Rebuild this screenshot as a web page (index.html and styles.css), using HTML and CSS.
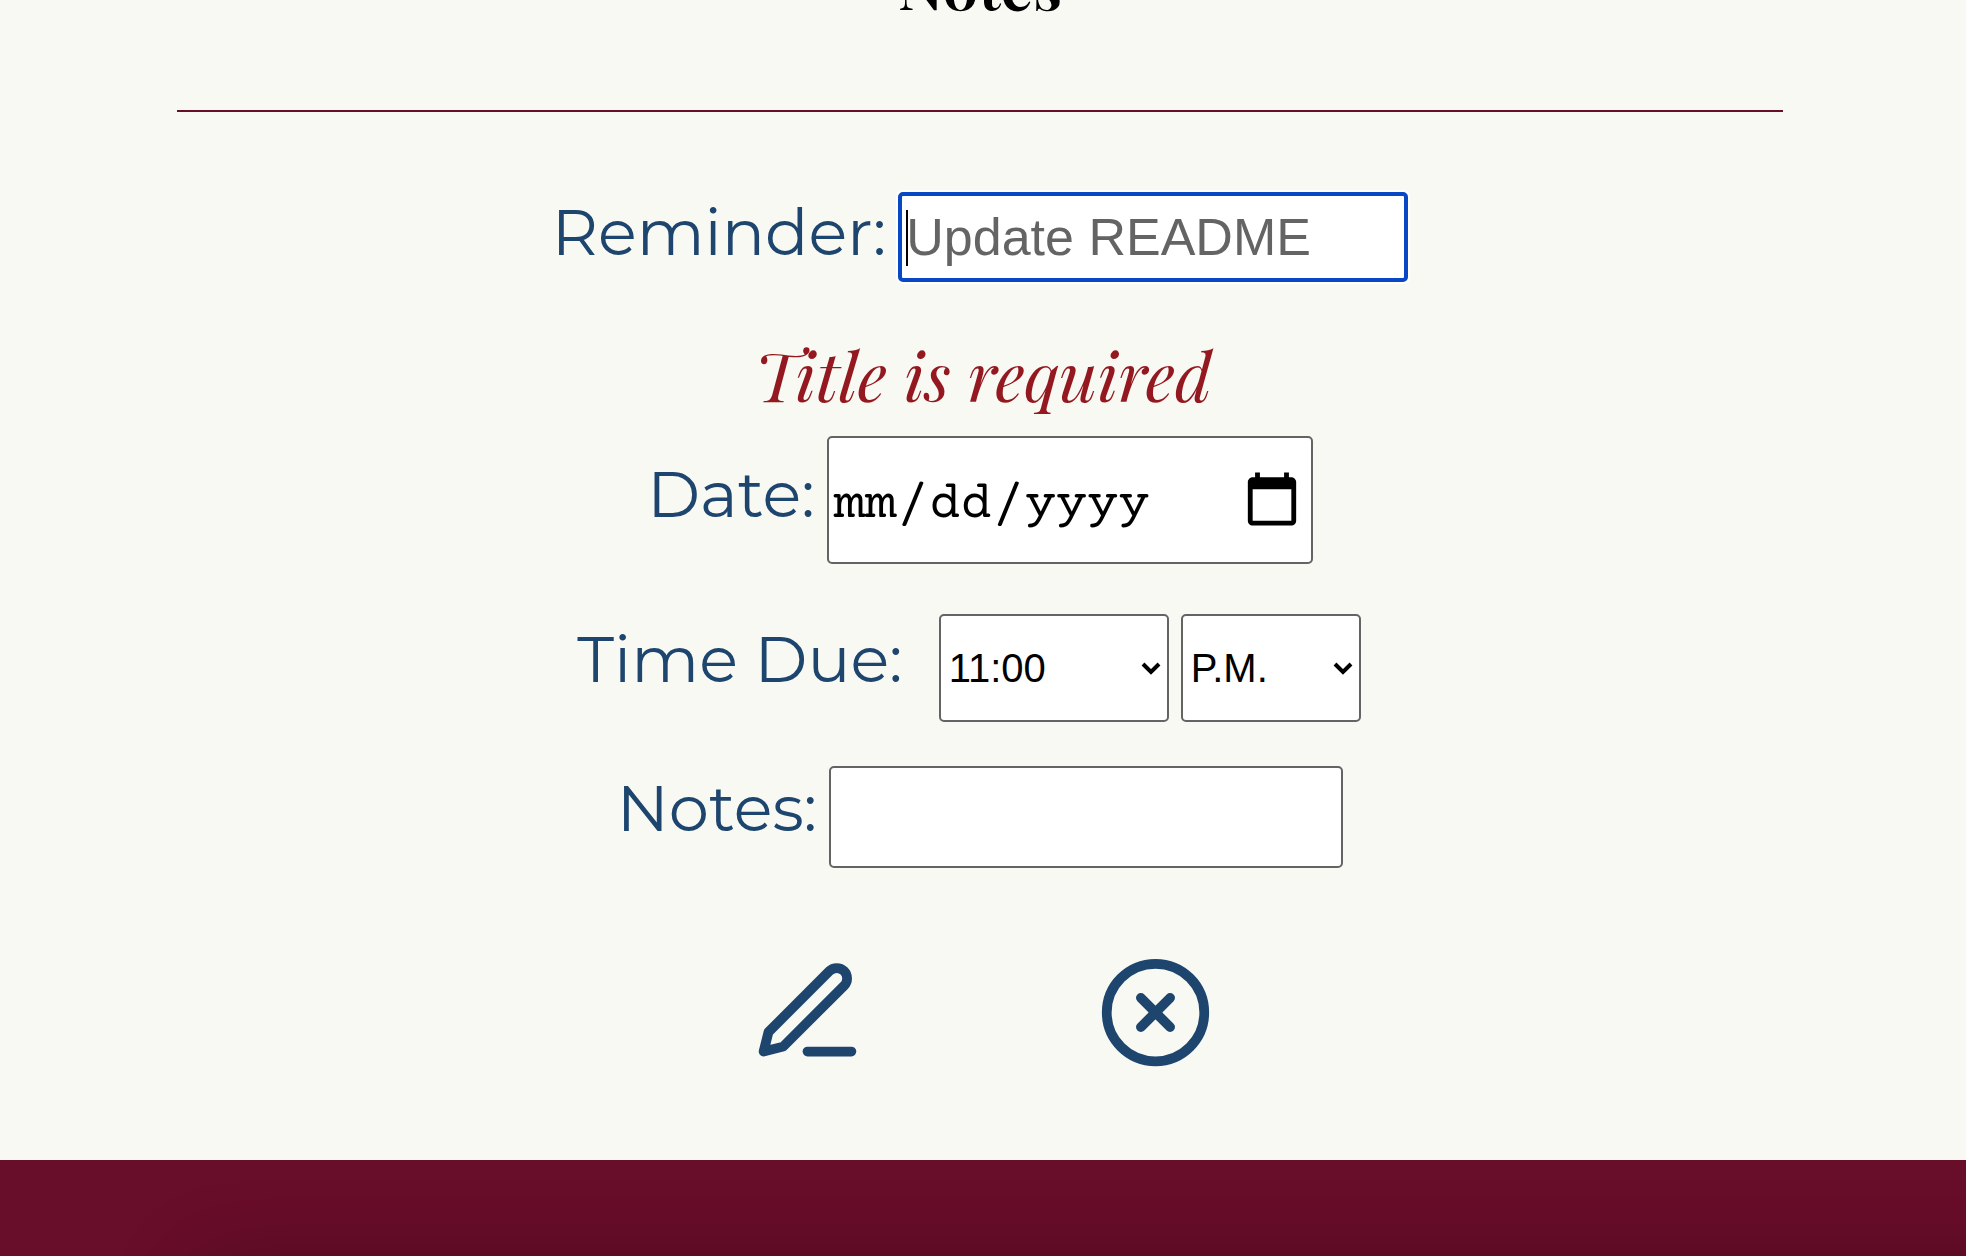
FILE: index.html
```html
<!DOCTYPE html>
<html lang="en">
<head>
<meta charset="utf-8">
<title>Edit reminder</title>
<link rel="stylesheet" href="styles.css">
</head>
<body>
<main class="page">
  <h1 class="title">Notes</h1>
  <hr class="rule">
  <form class="form">
    <div class="row row-reminder">
      <label for="reminder">Reminder:</label>
      <input class="field field-reminder" id="reminder" type="text" placeholder="Update README" autofocus>
    </div>
    <p class="error">Title is required</p>
    <div class="row row-date">
      <label for="date">Date:</label>
      <input class="field field-date" id="date" type="date">
    </div>
    <div class="row row-time">
      <label for="time">Time Due:</label>
      <select class="field field-time" id="time"><option>11:00</option></select>
      <select class="field field-period" aria-label="A.M. or P.M."><option>P.M.</option></select>
    </div>
    <div class="row row-notes">
      <label for="notes">Notes:</label>
      <input class="field field-notes" id="notes" type="text">
    </div>
    <div class="actions">
      <button class="action" type="submit" aria-label="Save">
        <svg viewBox="0 0 24 24"><path d="M12 20h9"/><path d="M16.5 3.5a2.121 2.121 0 0 1 3 3L7 19l-4 1 1-4L16.5 3.5z"/></svg>
      </button>
      <button class="action" type="button" aria-label="Cancel">
        <svg viewBox="0 0 24 24"><circle cx="12" cy="12" r="10"/><path d="M15 9l-6 6M9 9l6 6"/></svg>
      </button>
    </div>
  </form>
</main>
<footer class="footer"><div class="footer-card"></div></footer>
</body>
</html>
```
FILE: styles.css
```css
* { box-sizing: border-box; }

html, body { height: 100%; }

body {
  margin: 0;
  display: flex;
  flex-direction: column;
  overflow: hidden;
  background: #f8f9f3;
  color: #000;
  font-family: Montserrat, Inter, sans-serif;
}

.page {
  flex: none;
  padding: 0 183px 89px 177px;
}

.title {
  margin: -56px 0 86px;
  font: 600 64px/80px "Playfair Display", "Liberation Serif", serif;
  text-align: center;
}

.rule {
  margin: 0;
  border: 0;
  height: 2px;
  background: #680d2a;
}

.form {
  display: flex;
  flex-direction: column;
  align-items: center;
}

.row {
  display: flex;
  align-items: baseline;
  gap: 12px;
  color: #1d456e;
  font-size: 64px;
  line-height: 80px;
}

.row-reminder { margin-top: 80px; }
.row-time { margin-top: 50px; padding-right: 22px; }
.row-notes { margin-top: 44px; }

.field {
  margin: 0;
  padding: 0 4px;
  border: 2px solid #646464;
  border-radius: 5px;
  outline: 0;
  background: #fff;
  color: #000;
  font: 52px "Liberation Sans", sans-serif;
}

.field-reminder {
  width: 510px;
  height: 90px;
  border: 4px solid #0848c4;
  box-shadow: 0 0 0 2px #fff;
  background: #fff linear-gradient(#000, #000) no-repeat 4px 14px / 2px 56px;
  caret-color: transparent;
}

.field-reminder::placeholder { color: #646464; }

.error {
  margin: 52px 0 22px;
  padding-left: 6px;
  color: #94181f;
  font: italic 68px/80px "Playfair Display", "Liberation Serif", serif;
}

.field-date {
  width: 486px;
  height: 128px;
  padding-top: 10px;
  font-family: "Courier Prime", "Liberation Mono", monospace;
}

.field-date::-webkit-calendar-picker-indicator {
  width: 62px;
  height: 62px;
  padding: 0;
  margin: 0 4px 8px 0;
}

.field-time,
.field-period {
  height: 108px;
  padding: 0 8px;
  appearance: none;
  background: #fff url("data:image/svg+xml,%3Csvg xmlns='http://www.w3.org/2000/svg' viewBox='0 0 20 14'%3E%3Cpath d='M2 3l8 8 8-8' fill='none' stroke='black' stroke-width='4'/%3E%3C/svg%3E") no-repeat right 6px center / 20px 14px;
  font-size: 40px;
}

.field-time {
  width: 230px;
  margin-left: 24px;
}

.field-period { width: 180px; }

.field-notes {
  width: 514px;
  height: 102px;
  padding-bottom: 8px;
}

.actions {
  display: flex;
  gap: 231px;
  margin-top: 86px;
  padding-left: 3px;
}

.action {
  width: 117px;
  height: 117px;
  padding: 0;
  border: 0;
  background: none;
  color: #1d456e;
}

.action svg {
  display: block;
  fill: none;
  stroke: currentColor;
  stroke-width: 2;
  stroke-linecap: round;
  stroke-linejoin: round;
}

.footer {
  flex: 1;
  overflow: hidden;
  background: #680d2a;
}

.footer-card {
  height: 400px;
  margin: 110px -180px 0 200px;
  box-shadow: 0 0 80px rgba(0, 0, 0, 0.28);
}
```
